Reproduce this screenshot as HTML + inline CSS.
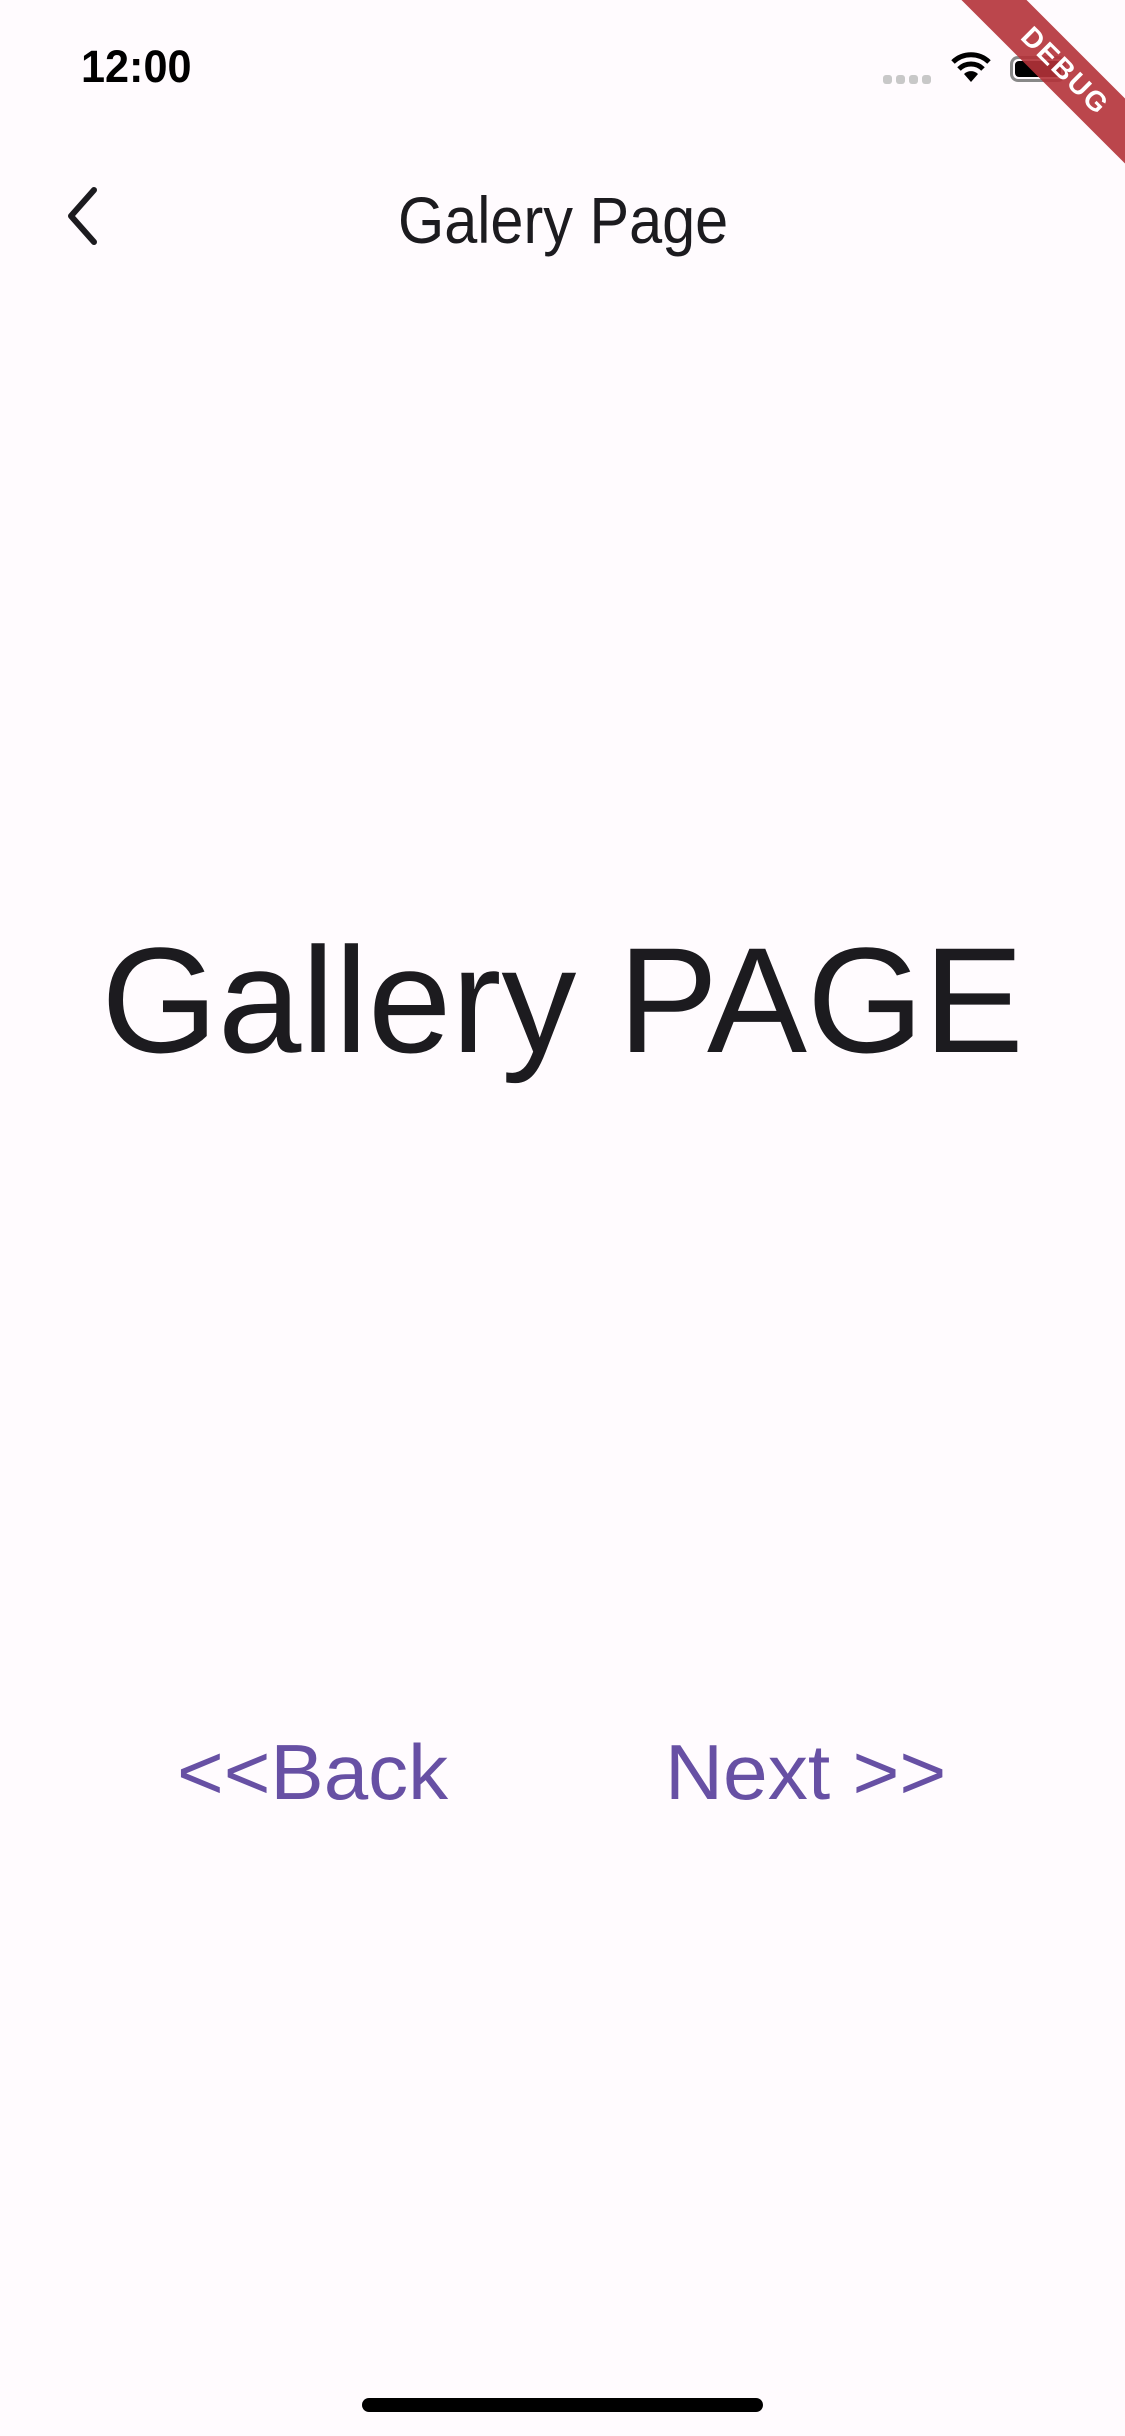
<!DOCTYPE html>
<html><head><meta charset="utf-8"><style>
html,body{margin:0;padding:0}
body{width:1125px;height:2436px;background:#fffbfe;position:relative;overflow:hidden;font-family:"Liberation Sans",sans-serif;color:#1c1b1f}
.a{position:absolute;white-space:nowrap;line-height:1}
</style></head><body>
<div class="a" style="left:81px;top:44px;font-size:45px;font-weight:bold;color:#000;transform:scaleX(0.96);transform-origin:left">12:00</div>
<div class="a" style="left:883px;top:75px;width:49px;height:9px">
<span style="position:absolute;left:0;width:9px;height:9px;border-radius:3px;background:#c8c8c8"></span>
<span style="position:absolute;left:13px;width:9px;height:9px;border-radius:3px;background:#c8c8c8"></span>
<span style="position:absolute;left:26px;width:9px;height:9px;border-radius:3px;background:#c8c8c8"></span>
<span style="position:absolute;left:39px;width:9px;height:9px;border-radius:3px;background:#c8c8c8"></span>
</div>
<svg class="a" style="left:951px;top:52px" width="40" height="32" viewBox="0 0 40 32">
<path d="M20 30 L13 22 A10 10 0 0 1 27 22 Z" fill="#000"/>
<path d="M8 17 A17 17 0 0 1 32 17" stroke="#000" stroke-width="5" fill="none"/>
<path d="M2 10 A26 26 0 0 1 38 10" stroke="#000" stroke-width="5" fill="none"/>
</svg>
<div class="a" style="left:1010px;top:56px;width:56px;height:26px;border:3px solid #888;border-radius:8px;box-sizing:border-box"></div>
<div class="a" style="left:1015px;top:61px;width:46px;height:16px;background:#000;border-radius:4px"></div>
<svg class="a" style="left:60px;top:184px" width="45" height="65" viewBox="0 0 45 65">
<path d="M34 6 L11 32 L34 58" stroke="#1c1b1f" stroke-width="6" fill="none" stroke-linecap="round" stroke-linejoin="round"/>
</svg>
<div class="a" style="left:398px;top:187px;font-size:66px;transform:scaleX(0.9);transform-origin:left">Galery Page</div>
<div class="a" style="left:0;width:1125px;text-align:center;top:925px;font-size:150px">Gallery PAGE</div>
<div class="a" style="left:177px;top:1733px;font-size:78px;color:#6750a4;transform:scaleX(1.025);transform-origin:left">&lt;&lt;Back</div>
<div class="a" style="left:665px;top:1733px;font-size:78px;color:#6750a4;transform:scaleX(1.03);transform-origin:left">Next &gt;&gt;</div>
<div class="a" style="left:362px;top:2398px;width:401px;height:14px;border-radius:7px;background:#000"></div>
<div class="a" style="left:915px;top:48px;width:300px;height:46px;background:rgba(180,50,56,0.9);transform:rotate(45deg);color:#fff;font-weight:bold;font-size:28px;text-align:center;line-height:46px;letter-spacing:2px">DEBUG</div>
</body></html>
